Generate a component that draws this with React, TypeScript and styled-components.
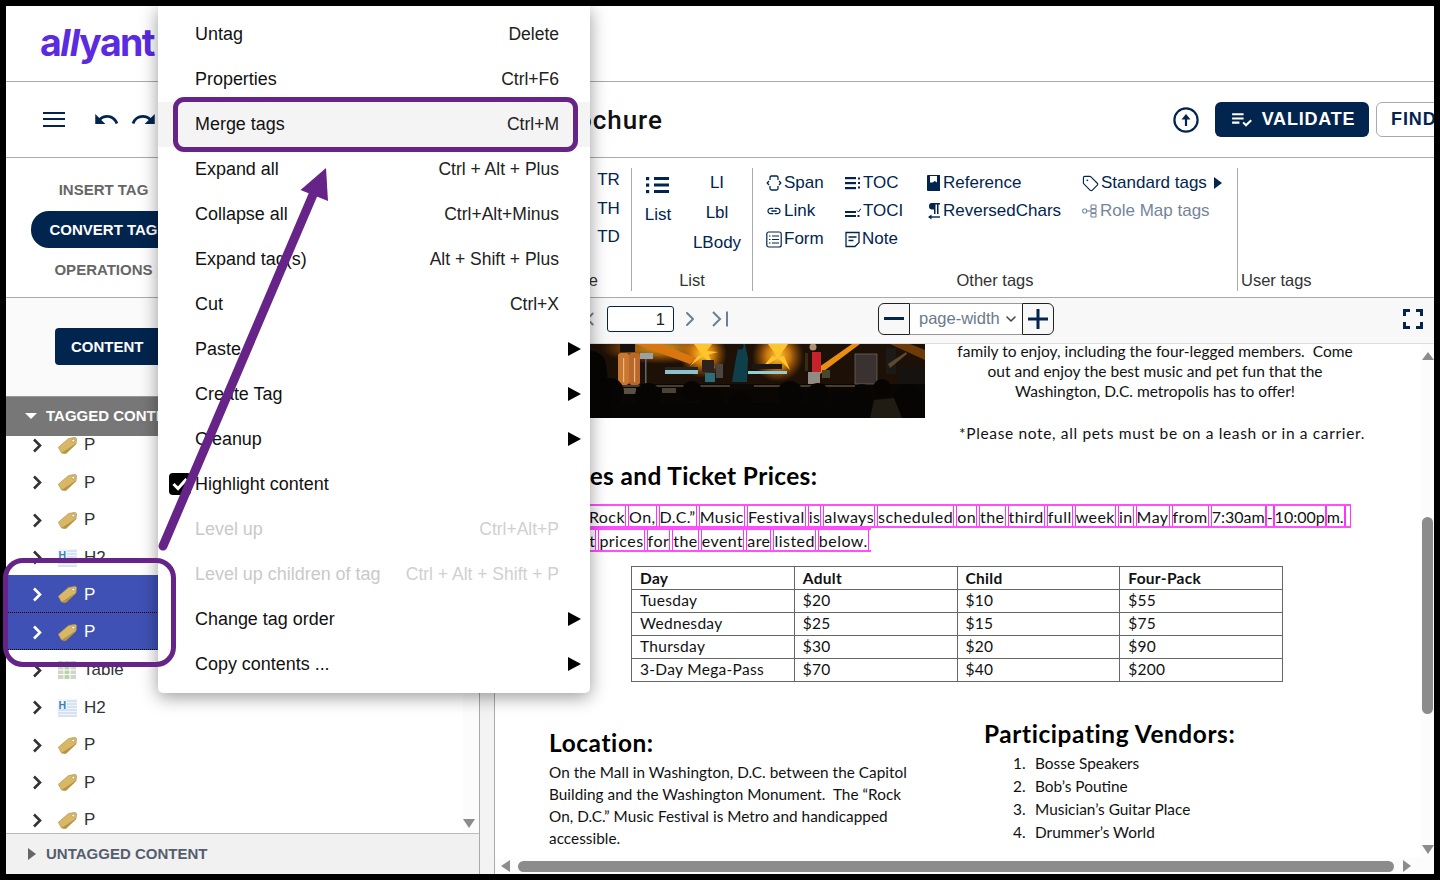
import React from 'react'
import styled, { createGlobalStyle } from 'styled-components'
import { ChevronDown, ChevronLeft, ChevronRight, Tag } from 'lucide-react'
import { MdUndo, MdRedo, MdPlaylistAddCheck, MdLink } from 'react-icons/md'

const NAVY = '#02254f'
const PURPLE = '#662489'
const UI_FONT = `"Liberation Sans", Arial, sans-serif`
const DOC_FONT = `Lato, "Open Sans", sans-serif`

const GlobalStyle = createGlobalStyle`
  html, body {
    margin: 0;
    background: #000;
    font-family: ${UI_FONT};
  }
  * { box-sizing: border-box; }
`

const Root = styled.div`
  position: relative;
  width: 1440px;
  height: 880px;
  padding: 6px;
  overflow: hidden;
`
const Frame = styled.div`
  position: relative;
  width: 1428px;
  height: 868px;
  background: #fff;
  overflow: hidden;
  display: flex;
  flex-direction: column;
`

/* top bars */
const LogoBar = styled.div`
  flex: 0 0 76px;
  border-bottom: 1px solid #aaa;
  padding-left: 34px;
  display: flex;
  align-items: center;
`
const Logo = styled.div`
  font-family: Inter, sans-serif;
  font-weight: 700;
  font-size: 37.5px;
  letter-spacing: -1.6px;
  color: #5a2be0;
  line-height: 1;
  white-space: nowrap;
  margin-top: -1px;
  i {
    font-style: italic;
    letter-spacing: -0.6px;
  }
`
const TitleBar = styled.div`
  flex: 0 0 76px;
  border-bottom: 1px solid #aaa;
  display: flex;
  align-items: center;
`
const TitleTools = styled.div`
  flex: 0 0 200px;
  padding-left: 37px;
  display: flex;
  align-items: center;
  gap: 10px;
  color: ${NAVY};
`
const Burger = styled.div`
  width: 22px;
  height: 15px;
  margin-right: 18px;
  border-top: 2.5px solid ${NAVY};
  border-bottom: 2.5px solid ${NAVY};
  position: relative;
  &::after {
    content: '';
    display: block;
    margin-top: 3.5px;
    height: 2.5px;
    background: ${NAVY};
  }
`
const Title = styled.h1`
  flex: 0 0 457px;
  margin: 0;
  text-align: right;
  font-family: Roboto, sans-serif;
  font-weight: 500;
  font-size: 26px;
  letter-spacing: 1px;
  color: #111;
  white-space: nowrap;
`
const Actions = styled.div`
  margin-left: auto;
  margin-right: -42px;
  display: flex;
  align-items: center;
`
const UploadIcon = styled.svg`
  width: 26px;
  height: 26px;
  margin-right: 16px;
`
const ValidateButton = styled.button`
  width: 154px;
  height: 35px;
  border: 0;
  border-radius: 6px;
  background: ${NAVY};
  color: #fff;
  font: bold 18px ${UI_FONT};
  letter-spacing: 0.8px;
  display: flex;
  align-items: center;
  justify-content: center;
  gap: 8px;
  margin-right: 7px;
`
const FindButton = styled.button`
  width: 100px;
  height: 35px;
  border: 1px solid #aaa;
  border-radius: 6px;
  background: #fff;
  color: ${NAVY};
  font: bold 18px ${UI_FONT};
  letter-spacing: 0.9px;
  text-align: left;
  padding-left: 14px;
`

/* ribbon */
const Ribbon = styled.div`
  flex: 0 0 140px;
  border-bottom: 1px solid #aaa;
  display: flex;
`
const Nav = styled.nav`
  flex: 0 0 190px;
  padding: 13px 0 0 25px;
  display: flex;
  flex-direction: column;
`
const NavItem = styled.div<{ $active?: boolean }>`
  width: 145px;
  height: 37px;
  margin-bottom: 3px;
  border-radius: 18px 0 0 18px;
  background: ${(p) => (p.$active ? NAVY : 'transparent')};
  color: ${(p) => (p.$active ? '#fff' : '#666')};
  font-weight: bold;
  font-size: 15px;
  white-space: nowrap;
  display: flex;
  align-items: center;
  justify-content: center;
`
const Group = styled.section<{ $width: number; $last?: boolean }>`
  flex: 0 0 ${(p) => p.$width}px;
  margin: 10px 0 6px;
  border-right: ${(p) => (p.$last ? '0' : '1px solid #aaa')};
  display: flex;
  flex-direction: column;
  color: ${NAVY};
  font-size: 17px;
`
const GroupBody = styled.div`
  flex: 1;
  min-height: 0;
`
const GroupLabel = styled.div<{ $align?: string; $pad?: number }>`
  height: 20px;
  line-height: 19px;
  font-size: 16.5px;
  color: #333;
  text-align: ${(p) => p.$align || 'center'};
  padding: 0 ${(p) => p.$pad || 0}px 0 ${(p) => (p.$align === 'left' ? 3 : 0)}px;
`
const TableCells = styled.div`
  margin-left: auto;
  width: 40px;
  padding-right: 5px;
  text-align: center;
  line-height: 28.5px;
  margin-top: -2px;
`
const TableGroupBody = styled(GroupBody)`
  display: flex;
`
const ListBody = styled(GroupBody)`
  display: grid;
  grid-template-columns: 52px 66px;
  text-align: center;
`
const ListLeft = styled.div`
  padding-top: 7px;
  display: flex;
  flex-direction: column;
  align-items: center;
  gap: 10px;
`
const ListRight = styled.div`
  line-height: 30px;
`
const OtherGrid = styled(GroupBody)`
  display: grid;
  grid-template-columns: 79px 81px 156px 1fr;
  grid-auto-rows: 28px;
  padding: 1px 0 0 13px;
`
const RibbonItem = styled.div<{ $disabled?: boolean }>`
  display: flex;
  align-items: center;
  gap: 2px;
  white-space: nowrap;
  color: ${(p) => (p.$disabled ? '#74859a' : NAVY)};
  svg {
    flex: 0 0 auto;
  }
`
const CaretRight = styled.span<{ $color?: string; $size?: number }>`
  display: inline-block;
  width: 0;
  height: 0;
  border-style: solid;
  border-width: ${(p) => p.$size || 6}px 0 ${(p) => p.$size || 6}px ${(p) => (p.$size || 6) + 2}px;
  border-color: transparent transparent transparent ${(p) => p.$color || NAVY};
`

/* lower part */
const Body = styled.div`
  flex: 1;
  min-height: 0;
  display: flex;
`
const LeftPane = styled.div`
  flex: 0 0 473px;
  display: flex;
  flex-direction: column;
`
const TabArea = styled.div`
  flex: 0 0 98px;
  background: #fafafa;
  padding: 30px 0 0 49px;
`
const ContentTab = styled.div`
  width: 160px;
  height: 37px;
  background: ${NAVY};
  color: #fff;
  font-weight: bold;
  font-size: 15px;
  border-radius: 4px 0 0 4px;
  display: flex;
  align-items: center;
  padding-left: 16px;
`
const PaneHeader = styled.div`
  flex: 0 0 40px;
  background: #777;
  border-top: 1px solid #999;
  display: flex;
  align-items: center;
  gap: 9px;
  padding: 0 0 2px 19px;
  color: #fff;
  font-weight: bold;
  font-size: 15px;
`
const CaretDown = styled.span`
  width: 0;
  height: 0;
  border-style: solid;
  border-width: 6px 6px 0 6px;
  border-color: #fff transparent transparent transparent;
`
const TreeArea = styled.div`
  flex: 1;
  min-height: 0;
  display: flex;
  overflow: hidden;
`
const TreeList = styled.div`
  flex: 1;
  margin-top: -11px;
`
const TreeRow = styled.div<{ $selected?: boolean }>`
  height: 37.5px;
  display: flex;
  align-items: center;
  padding: 3px 0 0 26px;
  background: ${(p) => (p.$selected ? '#3f51b5' : 'transparent')};
  border-bottom: ${(p) => (p.$selected ? '1px dotted #000' : '0')};
  color: ${(p) => (p.$selected ? '#fff' : '#333')};
  font-size: 17px;
  svg.tree-chevron {
    margin-right: 15px;
  }
  svg.tree-icon {
    margin-right: 7px;
  }
`
const TreeScroll = styled.div`
  flex: 0 0 16px;
  background: #fcfcfc;
  display: flex;
  flex-direction: column;
  justify-content: flex-end;
  align-items: center;
  padding: 0 4px 5px 0;
`
const GrayDown = styled.span`
  width: 0;
  height: 0;
  border-style: solid;
  border-width: 9px 6px 0 6px;
  border-color: #8c8c8c transparent transparent transparent;
`
const GrayUp = styled.span`
  width: 0;
  height: 0;
  border-style: solid;
  border-width: 0 6px 8px 6px;
  border-color: transparent transparent #8c8c8c transparent;
`
const Untagged = styled.div`
  flex: 0 0 41px;
  background: #f1f1f1;
  border-top: 1px solid #bbb;
  display: flex;
  align-items: center;
  gap: 10px;
  padding: 0 0 1px 22px;
  color: #555e6e;
  font-weight: bold;
  font-size: 15px;
`
const Splitter = styled.div`
  flex: 0 0 16px;
  background: #f3f3f3;
  border-left: 1px solid #aaa;
  border-right: 1px solid #aaa;
`
const DocArea = styled.div`
  flex: 1;
  min-width: 0;
  display: flex;
  flex-direction: column;
`
const Toolbar = styled.div`
  flex: 0 0 46px;
  background: #f8f8f8;
  border-bottom: 1px solid #ddd;
  display: flex;
  align-items: center;
  padding: 0 11px 4px 84px;
  color: #6c7f93;
`
const PageInput = styled.div`
  width: 67px;
  height: 26px;
  margin: 0 4px 0 6px;
  background: #fff;
  border: 1px solid ${NAVY};
  border-radius: 3px;
  color: #222;
  font-size: 16.5px;
  line-height: 24px;
  text-align: right;
  padding-right: 8px;
`
const LastPage = styled.svg`
  margin-left: 9px;
`
const ZoomCluster = styled.div`
  margin-left: 147px;
  display: flex;
  align-items: center;
`
const ZoomButton = styled.div<{ $side: 'left' | 'right' }>`
  width: 32px;
  height: 32px;
  background: #f8f8f8;
  border: 1.5px solid #222;
  border-radius: ${(p) => (p.$side === 'left' ? '6px 0 0 6px' : '0 6px 6px 0')};
  color: ${NAVY};
  display: flex;
  align-items: center;
  justify-content: center;
`
const ZoomSelect = styled.div`
  width: 112px;
  height: 32px;
  background: #fff;
  border-top: 1px solid #999;
  border-bottom: 1px solid #999;
  color: #6a7a8c;
  font-size: 16.5px;
  display: flex;
  align-items: center;
  justify-content: space-between;
  padding: 0 3px 0 9px;
  svg {
    color: #445;
  }
`
const Fullscreen = styled.svg`
  margin-left: auto;
  width: 20px;
  height: 20px;
`
const DocMain = styled.div`
  flex: 1;
  min-height: 0;
  display: flex;
  overflow: hidden;
`
const Page = styled.div`
  flex: 1;
  min-width: 0;
  padding-left: 54px;
  font-family: ${DOC_FONT};
  font-size: 15.5px;
  color: #111;
  overflow: hidden;
`
const PageTop = styled.div`
  display: flex;
  margin-top: -3px;
`
const Photo = styled.svg`
  flex: 0 0 376px;
  height: 74px;
  margin-top: 3px;
`
const Intro = styled.div`
  flex: 0 0 430px;
  margin-left: 15px;
  line-height: 20px;
  text-align: center;
  white-space: pre-wrap;
`
const Note = styled.div`
  margin: 22px 0 0 19px;
  text-align: left;
  white-space: nowrap;
  letter-spacing: 0.65px;
`
const Heading = styled.h2`
  margin: 18px 0 13px;
  font-size: 24.4px;
  line-height: 30px;
  font-weight: 700;
  letter-spacing: 0.4px;
  color: #000;
  white-space: nowrap;
`
const TagLines = styled.div`
  display: flex;
  flex-direction: column;
  align-items: flex-start;
  font-size: 16px;
  letter-spacing: 0.45px;
`
const TagLine = styled.div`
  display: flex;
  height: 24px;
  border-top: 2px solid #ff4dff;
  border-bottom: 2px solid #ff4dff;
  line-height: 19px;
  white-space: nowrap;
`
const Word = styled.span<{ $tight?: boolean }>`
  padding-top: 1px;
  border-left: 1.5px solid #ff33ff;
  border-right: 1.5px solid #ff33ff;
  margin-right: ${(p) => (p.$tight ? 0 : 2)}px;
  letter-spacing: ${(p) => (p.$tight ? '0' : 'inherit')};
`
const EndWord = styled(Word)`
  width: 6px;
  margin-right: 0;
`
const PriceTable = styled.table`
  margin: 14px 0 0 82px;
  width: 652px;
  border-collapse: collapse;
  table-layout: fixed;
  line-height: 21px;
  letter-spacing: 0.3px;
  th, td {
    height: 23px;
    border: 1px solid #666;
    padding: 0 0 1px 8px;
    text-align: left;
  }
  th {
    padding-bottom: 0;
  }
`
const PageBottom = styled.div`
  margin-top: 37px;
  display: grid;
  grid-template-columns: 435px 1fr;
`
const LocationCol = styled.div`
  padding-top: 9px;
  line-height: 22px;
  font-size: 15.3px;
  letter-spacing: 0.04px;
`
const BlockHeading = styled.h3`
  margin: 0 0 3px;
  font-size: 24.4px;
  line-height: 30px;
  font-weight: 700;
  letter-spacing: 0.6px;
  color: #000;
  white-space: nowrap;
`
const VendorCol = styled.div`
  font-size: 15.4px;
`
const VendorRow = styled.div`
  display: flex;
  padding-left: 29px;
  line-height: 23px;
`
const VendorNum = styled.span`
  flex: 0 0 22px;
`
const VScroll = styled.div`
  flex: 0 0 13px;
  background: #fcfcfc;
  display: flex;
  flex-direction: column;
  align-items: center;
  padding-top: 8px;
`
const VThumb = styled.div`
  width: 11px;
  height: 197px;
  margin: 157px 0 131px;
  border-radius: 6px;
  background: #8c8c8c;
`
const HScroll = styled.div`
  flex: 0 0 16px;
  background: #fcfcfc;
  display: flex;
  align-items: center;
  padding: 0 0 0 6px;
`
const HThumb = styled.div`
  width: 876px;
  height: 11px;
  margin: 0 9px 0 8px;
  border-radius: 6px;
  background: #8c8c8c;
`
const GrayLeft = styled.span`
  width: 0;
  height: 0;
  border-style: solid;
  border-width: 6px 9px 6px 0;
  border-color: transparent #8c8c8c transparent transparent;
`

/* context menu and annotations */
const Menu = styled.div`
  position: absolute;
  left: 152px;
  top: 0;
  width: 432px;
  height: 687px;
  padding: 5.5px 0;
  background: #fff;
  border-radius: 0 0 5px 5px;
  box-shadow: 0 4px 18px rgba(0, 0, 0, 0.4);
  font-size: 17.95px;
`
const MenuItem = styled.div<{ $hover?: boolean; $disabled?: boolean }>`
  position: relative;
  height: 45px;
  padding: 0 31px 0 37px;
  display: flex;
  align-items: center;
  justify-content: space-between;
  white-space: nowrap;
  background: ${(p) => (p.$hover ? '#f4f4f4' : 'transparent')};
  color: ${(p) => (p.$disabled ? '#c9c9c9' : '#111')};
`
const Shortcut = styled.span<{ $disabled?: boolean }>`
  font-size: 17.5px;
  color: ${(p) => (p.$disabled ? '#d0d0d0' : '#222')};
`
const SubCaret = styled.span`
  width: 0;
  height: 0;
  margin-right: -22px;
  border-style: solid;
  border-width: 7px 0 7px 13px;
  border-color: transparent transparent transparent #000;
`
const CheckBox = styled.span`
  position: absolute;
  left: 11px;
  top: 11px;
  width: 22px;
  height: 22px;
  border-radius: 4px;
  background: #000;
  display: flex;
  align-items: center;
  justify-content: center;
`
const Callout = styled.div`
  position: absolute;
  border: 5px solid ${PURPLE};
  pointer-events: none;
`
const MergeCallout = styled(Callout)`
  left: 173px;
  top: 97px;
  width: 405px;
  height: 55px;
  border-radius: 11px;
`
const RowsCallout = styled(Callout)`
  left: 3px;
  top: 558px;
  width: 173px;
  height: 109px;
  border-radius: 20px;
`
const ArrowOverlay = styled.svg`
  position: absolute;
  left: 0;
  top: 0;
  pointer-events: none;
`

/* icons */
const TreeChevron = () => (
  <svg className="tree-chevron" width="11" height="15" viewBox="0 0 11 15" fill="none" stroke="currentColor" strokeWidth="2.6">
    <path d="M2 1.5l6 6-6 6" />
  </svg>
)
const TagIcon = () => (
  <svg className="tree-icon" width="19" height="17" viewBox="0 0 19 17">
    <path d="M0.3 10.3 L10.5 1.5 L17 0.3 L18.7 1.5 L18 7 L7.8 16.6 L3.5 16 Z" fill="#d8b866" stroke="#ac9044" strokeWidth="0.6" />
    <path d="M3.5 16 L18 6.5 L18 7 L7.8 16.6 Z" fill="#b39443" />
    <circle cx="15.3" cy="3.6" r="1.4" fill="#fff" stroke="#8a7a45" strokeWidth="0.5" />
  </svg>
)
const H2Icon = () => (
  <svg className="tree-icon" width="19" height="18" viewBox="0 0 19 18">
    <rect x="0" y="0" width="19" height="18" fill="#f1f5fb" />
    <text x="0.5" y="9.5" fontSize="10.5" fontWeight="bold" fontFamily="Liberation Sans" fill="#3b7fb8">H</text>
    <path d="M9 2h10M9 5h10M9 8h10M0 11h19M0 14h19M0 17h19" stroke="#bcd0e8" strokeWidth="1" />
  </svg>
)
const TableIcon = () => (
  <svg className="tree-icon" width="18" height="18" viewBox="0 0 18 18">
    <rect width="18" height="18" fill="#cdd8c4" />
    <rect y="0" width="18" height="4" fill="#c9c9c9" />
    <rect x="6" y="5" width="5" height="13" fill="#b7d3a8" />
    <path d="M0 4.5h18M0 9h18M0 13.5h18M6 0v18M12 0v18" stroke="#fff" strokeWidth="1" />
  </svg>
)
const SpanIcon = () => (
  <svg width="16" height="20" viewBox="0 0 16 20" fill="none" stroke={NAVY} strokeWidth="1.3">
    <path d="M4 7V4.5Q4 3 5.5 3h5Q12 3 12 4.5V7M4 13v2.5Q4 17 5.5 17h5q1.5 0 1.5-1.5V13" />
    <path d="M3 8L1.2 10 3 12M13 8l1.8 2L13 12" />
  </svg>
)
const FormIcon = () => (
  <svg width="16" height="17" viewBox="0 0 16 17" fill="none" stroke={NAVY} strokeWidth="1.2">
    <rect x="0.8" y="1" width="14.4" height="15" rx="2" />
    <path d="M3 5h1.5M6 5h7M3 8.5h1.5M6 8.5h7M3 12h1.5M6 12h7" />
  </svg>
)
const TocIcon = () => (
  <svg width="16" height="16" viewBox="0 0 16 16" fill={NAVY}>
    <rect x="0" y="2" width="11" height="2.2" />
    <rect x="0" y="7" width="11" height="2.2" />
    <rect x="0" y="12" width="11" height="2.2" />
    <rect x="13" y="2.5" width="2" height="2" />
    <rect x="13" y="7" width="2" height="2" />
    <rect x="13" y="11.5" width="2" height="2" />
  </svg>
)
const TociIcon = () => (
  <svg width="16" height="16" viewBox="0 0 16 16" fill={NAVY}>
    <rect x="0" y="8" width="11" height="2" />
    <rect x="0" y="12" width="11" height="2" />
    <rect x="12.5" y="12" width="2" height="2" />
    <path d="M12 7.5l1.5 1.5L16 5.5" fill="none" stroke={NAVY} strokeWidth="1" />
  </svg>
)
const NoteIcon = () => (
  <svg width="15" height="17" viewBox="0 0 15 17" fill="none" stroke={NAVY} strokeWidth="1.3">
    <path d="M1 1.5h13v10l-4 4H1zM3.5 6h8M3.5 9.5h5" />
  </svg>
)
const ReferenceIcon = () => (
  <svg width="15" height="18" viewBox="0 0 15 18" fill={NAVY}>
    <path d="M1 2q0-1 1-1h12v16H2q-1 0-1-1z" />
    <path d="M4 1h7v6.5L8.8 6 6.5 7.5H4z" fill="#fff" transform="translate(0 1)" />
  </svg>
)
const ReversedIcon = () => (
  <svg width="15" height="18" viewBox="0 0 15 18" fill={NAVY}>
    <path d="M6 1h8v1.5h-1.5V12H11V2.5H9.5V12H8V7.5H6Q3 7.5 3 4.2T6 1z" />
    <path d="M14 15H4.5" stroke={NAVY} strokeWidth="1.4" />
    <path d="M5.5 12.5v5L2 15z" />
  </svg>
)
const RoleMapIcon = () => (
  <svg width="16" height="14" viewBox="0 0 16 14" fill="none" stroke="#74859a" strokeWidth="1.1">
    <rect x="0.7" y="5" width="4" height="4" rx="1.5" />
    <rect x="9" y="1" width="5" height="3.5" rx="0.6" />
    <rect x="9" y="5.2" width="5" height="3.5" rx="0.6" />
    <rect x="9" y="9.5" width="5" height="3.5" rx="0.6" />
    <path d="M4.7 7H9" />
  </svg>
)
const BigListIcon = () => (
  <svg width="24" height="20" viewBox="0 0 24 20" fill={NAVY}>
    <rect x="0" y="2" width="3.2" height="3.2" />
    <rect x="0" y="8.5" width="3.2" height="3.2" />
    <rect x="0" y="15" width="3.2" height="3.2" />
    <rect x="8" y="2" width="15" height="3" />
    <rect x="8" y="8.5" width="15" height="3" />
    <rect x="8" y="15" width="15" height="3" />
  </svg>
)
const LastPageIcon = () => (
  <LastPage width="20" height="20" viewBox="0 0 20 20" fill="none" stroke="#6c7f93" strokeWidth="2">
    <path d="M2 3l7 7-7 7M16 2.5v15" />
  </LastPage>
)

const menuItems: {
  label: string
  keys?: string
  sub?: boolean
  hover?: boolean
  disabled?: boolean
  checked?: boolean
}[] = [
  { label: 'Untag', keys: 'Delete' },
  { label: 'Properties', keys: 'Ctrl+F6' },
  { label: 'Merge tags', keys: 'Ctrl+M', hover: true },
  { label: 'Expand all', keys: 'Ctrl + Alt + Plus' },
  { label: 'Collapse all', keys: 'Ctrl+Alt+Minus' },
  { label: 'Expand tag(s)', keys: 'Alt + Shift + Plus' },
  { label: 'Cut', keys: 'Ctrl+X' },
  { label: 'Paste', sub: true },
  { label: 'Create Tag', sub: true },
  { label: 'Cleanup', sub: true },
  { label: 'Highlight content', checked: true },
  { label: 'Level up', keys: 'Ctrl+Alt+P', disabled: true },
  { label: 'Level up children of tag', keys: 'Ctrl + Alt + Shift + P', disabled: true },
  { label: 'Change tag order', sub: true },
  { label: 'Copy contents ...', sub: true },
]

const treeRows: { label: string; icon: 'tag' | 'h2' | 'table'; selected?: boolean }[] = [
  { label: 'P', icon: 'tag' },
  { label: 'P', icon: 'tag' },
  { label: 'P', icon: 'tag' },
  { label: 'H2', icon: 'h2' },
  { label: 'P', icon: 'tag', selected: true },
  { label: 'P', icon: 'tag', selected: true },
  { label: 'Table', icon: 'table' },
  { label: 'H2', icon: 'h2' },
  { label: 'P', icon: 'tag' },
  { label: 'P', icon: 'tag' },
  { label: 'P', icon: 'tag' },
]

const lineOne = [
  'The “Rock', 'On,', 'D.C.”', 'Music', 'Festival', 'is', 'always', 'scheduled', 'on', 'the', 'third',
  'full', 'week', 'in', 'May', 'from',
]
const lineOneTail = ['7:30am', '-', '10:00p', 'm.']
const lineTwo = ['Ticket', 'prices', 'for', 'the', 'event', 'are', 'listed', 'below.']

const prices = [
  ['Tuesday', '$20', '$10', '$55'],
  ['Wednesday', '$25', '$15', '$75'],
  ['Thursday', '$30', '$20', '$90'],
  ['3-Day Mega-Pass', '$70', '$40', '$200'],
]

const vendors = ['Bosse Speakers', 'Bob’s Poutine', 'Musician’s Guitar Place', 'Drummer’s World']

const treeIcons = { tag: <TagIcon />, h2: <H2Icon />, table: <TableIcon /> }

const crowd = [
  [58, 52, 13], [20, 48, 14], [102, 47, 10], [122, 56, 12], [150, 60, 12], [200, 50, 13],
  [228, 50, 11], [252, 58, 12], [272, 50, 10], [292, 44, 9], [318, 54, 14],
]

const StagePhoto = () => (
  <Photo viewBox="-41 0 376 74" preserveAspectRatio="none">
    <defs>
      <radialGradient id="glow">
        <stop offset="0" stopColor="#ffcf3a" />
        <stop offset="0.45" stopColor="#e8890f" stopOpacity="0.85" />
        <stop offset="1" stopColor="#b85f08" stopOpacity="0" />
      </radialGradient>
    </defs>
    <rect x="-41" width="376" height="74" fill="#0a0604" />
    <rect x="-41" width="376" height="40" fill="#1d1007" />
    <ellipse cx="70" cy="4" rx="60" ry="16" fill="url(#glow)" opacity="0.75" />
    <ellipse cx="113" cy="10" rx="24" ry="24" fill="url(#glow)" />
    <ellipse cx="188" cy="12" rx="26" ry="26" fill="url(#glow)" />
    <path d="M113 12 L104 0 L122 0 Z M113 12 L100 22 L108 12 Z M113 12 L125 24 L118 10 Z M113 12 L128 8 L117 7 Z" fill="#ffc52e" />
    <path d="M188 14 L178 0 L198 0 Z M188 14 L172 24 L182 12 Z M188 14 L200 26 L194 12 Z" fill="#ffc52e" />
    <path d="M222 28 L262 0 L270 0 L230 30 Z" fill="#ea8d12" />
    <path d="M45 0 L100 20 L106 14 L72 0 Z" fill="#d9760f" />
    <path d="M300 0 L335 16 L335 6 L320 0 Z" fill="#6e3b08" />
    <rect x="28" y="9" width="11" height="32" rx="3" fill="#c9772f" />
    <rect x="39" y="9" width="11" height="32" rx="3" fill="#b8682a" />
    <rect x="33" y="14" width="1.2" height="24" fill="#e8b48a" />
    <rect x="44" y="14" width="1.2" height="24" fill="#e8b48a" />
    <rect x="30" y="0" width="15" height="8" fill="#15110e" />
    <rect x="50" y="9" width="13" height="6" fill="#9aa0a4" />
    <rect x="55" y="15" width="1.5" height="26" fill="#666" />
    <rect x="75" y="23" width="33" height="3" fill="#252220" />
    <rect x="75" y="26" width="33" height="4" fill="#8fc0c9" />
    <rect x="112" y="16" width="12" height="12" fill="#2a2320" />
    <rect x="115" y="29" width="10" height="9" fill="#2b6d78" />
    <rect x="126" y="20" width="7" height="14" fill="#4d4640" />
    <path d="M142 38 L146 14 L149 0 L155 0 L158 14 L157 38 Z" fill="#0e3f4b" />
    <circle cx="150" cy="2" r="3.5" fill="#161311" />
    <rect x="158" y="27" width="39" height="3" fill="#93cdd4" />
    <rect x="162" y="20" width="30" height="5" fill="#1a1816" />
    <rect x="215" y="9" width="3" height="18" fill="#3a2a12" />
    <rect x="222" y="8" width="9" height="20" fill="#c5222a" />
    <circle cx="223" cy="3" r="3.5" fill="#b58f72" />
    <rect x="218" y="28" width="12" height="12" fill="#8f8a82" />
    <rect x="232" y="26" width="8" height="8" fill="#4a4636" />
    <rect x="265" y="10" width="22" height="30" fill="#3a3230" stroke="#7a6c5c" strokeWidth="0.7" />
    <rect x="296" y="4" width="10" height="26" fill="#1c1a16" />
    <path d="M298 20 L316 8 L317 10 L300 24 Z" fill="#5a4a30" />
    <rect x="308" y="22" width="27" height="18" fill="#15120f" />
    <rect x="0" y="41" width="265" height="2" fill="#4a3d2c" />
    <rect x="30" y="44" width="16" height="6" fill="#5a5044" />
    <rect x="72" y="44" width="14" height="5" fill="#4a4238" />
    <rect x="140" y="40" width="24" height="5" fill="#0c0a08" />
    <path d="M-41 18 L-10 6 Q14 5 16 20 L22 74 L-41 74 Z" fill="#070504" />
    {crowd.map(([cx, cy, r]) => (
      <circle key={cx} cx={cx} cy={cy} r={r} fill="#070504" />
    ))}
    <path d="M10 74 L16 60 L335 58 L335 74 Z" fill="#070504" />
    <path d="M280 74 L284 56 L304 54 L312 74 Z" fill="#201b13" />
  </Photo>
)

const App = () => {
  return (
    <Root>
      <GlobalStyle />
      <Frame>
        <LogoBar>
          <Logo>
            a<i>ll</i>yant
          </Logo>
        </LogoBar>

        <TitleBar>
          <TitleTools>
            <Burger />
            <MdUndo size={27} />
            <MdRedo size={27} />
          </TitleTools>
          <Title>Festival Brochure</Title>
          <Actions>
            <UploadIcon viewBox="0 0 26 26" fill="none">
              <circle cx="13" cy="13" r="11.6" stroke={NAVY} strokeWidth="2.2" />
              <path d="M13 19v-8" stroke={NAVY} strokeWidth="2.2" />
              <path d="M8.5 12.5L13 7l4.5 5.5z" fill={NAVY} />
            </UploadIcon>
            <ValidateButton>
              <MdPlaylistAddCheck size={25} />
              VALIDATE
            </ValidateButton>
            <FindButton>FIND</FindButton>
          </Actions>
        </TitleBar>

        <Ribbon>
          <Nav>
            <NavItem>INSERT TAG</NavItem>
            <NavItem $active>CONVERT TAG</NavItem>
            <NavItem>OPERATIONS</NavItem>
          </Nav>
          <Group $width={436}>
            <TableGroupBody>
              <TableCells>
                TR
                <br />
                TH
                <br />
                TD
              </TableCells>
            </TableGroupBody>
            <GroupLabel $align="right" $pad={33}>
              Table
            </GroupLabel>
          </Group>
          <Group $width={121}>
            <ListBody>
              <ListLeft>
                <BigListIcon />
                <span>List</span>
              </ListLeft>
              <ListRight>
                LI
                <br />
                Lbl
                <br />
                LBody
              </ListRight>
            </ListBody>
            <GroupLabel>List</GroupLabel>
          </Group>
          <Group $width={485}>
            <OtherGrid>
              <RibbonItem>
                <SpanIcon />
                Span
              </RibbonItem>
              <RibbonItem>
                <TocIcon />
                TOC
              </RibbonItem>
              <RibbonItem>
                <ReferenceIcon />
                Reference
              </RibbonItem>
              <RibbonItem>
                <Tag size={17} strokeWidth={1.6} />
                Standard tags&nbsp;
                <CaretRight $size={6} />
              </RibbonItem>
              <RibbonItem>
                <MdLink size={16} />
                Link
              </RibbonItem>
              <RibbonItem>
                <TociIcon />
                TOCI
              </RibbonItem>
              <RibbonItem>
                <ReversedIcon />
                ReversedChars
              </RibbonItem>
              <RibbonItem $disabled>
                <RoleMapIcon />
                Role Map tags
              </RibbonItem>
              <RibbonItem>
                <FormIcon />
                Form
              </RibbonItem>
              <RibbonItem>
                <NoteIcon />
                Note
              </RibbonItem>
            </OtherGrid>
            <GroupLabel>Other tags</GroupLabel>
          </Group>
          <Group $width={196} $last>
            <GroupBody />
            <GroupLabel $align="left">User tags</GroupLabel>
          </Group>
        </Ribbon>

        <Body>
          <LeftPane>
            <TabArea>
              <ContentTab>CONTENT</ContentTab>
            </TabArea>
            <PaneHeader>
              <CaretDown />
              TAGGED CONTENT
            </PaneHeader>
            <TreeArea>
              <TreeList>
                {treeRows.map((row, i) => (
                  <TreeRow key={i} $selected={row.selected}>
                    <TreeChevron />
                    {treeIcons[row.icon]}
                    {row.label}
                  </TreeRow>
                ))}
              </TreeList>
              <TreeScroll>
                <GrayDown />
              </TreeScroll>
            </TreeArea>
            <Untagged>
              <CaretRight $color="#666" $size={6} />
              UNTAGGED CONTENT
            </Untagged>
          </LeftPane>

          <Splitter />

          <DocArea>
            <Toolbar>
              <ChevronLeft size={22} />
              <PageInput>1</PageInput>
              <ChevronRight size={24} />
              <LastPageIcon />
              <ZoomCluster>
                <ZoomButton $side="left">
                  <svg width="20" height="4" viewBox="0 0 20 4">
                    <rect width="20" height="3" fill={NAVY} />
                  </svg>
                </ZoomButton>
                <ZoomSelect>
                  page-width
                  <ChevronDown size={16} strokeWidth={2.4} />
                </ZoomSelect>
                <ZoomButton $side="right">
                  <svg width="20" height="20" viewBox="0 0 20 20" fill={NAVY}>
                    <rect y="8.5" width="20" height="3" />
                    <rect x="8.5" width="3" height="20" />
                  </svg>
                </ZoomButton>
              </ZoomCluster>
              <Fullscreen viewBox="0 0 20 20" fill="none" stroke={NAVY} strokeWidth="3">
                <path d="M1.5 7V1.5H7M13 1.5h5.5V7M18.5 13v5.5H13M7 18.5H1.5V13" />
              </Fullscreen>
            </Toolbar>

            <DocMain>
              <Page>
                <PageTop>
                  <StagePhoto />
                  <Intro>
                    {'family to enjoy, including the four-legged members.  Come\nout and enjoy the best music and pet fun that the\nWashington, D.C. metropolis has to offer!'}
                    <Note>*Please note, all pets must be on a leash or in a carrier.</Note>
                  </Intro>
                </PageTop>
                <Heading>Dates and Ticket Prices:</Heading>
                <TagLines>
                  <TagLine>
                    {lineOne.map((w, i) => (
                      <Word key={i}>{w}</Word>
                    ))}
                    {lineOneTail.map((w) => (
                      <Word key={w} $tight>
                        {w}
                      </Word>
                    ))}
                    <EndWord />
                  </TagLine>
                  <TagLine>
                    {lineTwo.map((w, i) => (
                      <Word key={i}>{w}</Word>
                    ))}
                  </TagLine>
                </TagLines>
                <PriceTable>
                  <thead>
                    <tr>
                      <th>Day</th>
                      <th>Adult</th>
                      <th>Child</th>
                      <th>Four-Pack</th>
                    </tr>
                  </thead>
                  <tbody>
                    {prices.map((row) => (
                      <tr key={row[0]}>
                        {row.map((cell) => (
                          <td key={cell}>{cell}</td>
                        ))}
                      </tr>
                    ))}
                  </tbody>
                </PriceTable>
                <PageBottom>
                  <LocationCol>
                    <BlockHeading>Location:</BlockHeading>
                    On the Mall in Washington, D.C. between the Capitol
                    <br />
                    Building and the Washington Monument.&nbsp; The “Rock
                    <br />
                    On, D.C.” Music Festival is Metro and handicapped
                    <br />
                    accessible.
                  </LocationCol>
                  <VendorCol>
                    <BlockHeading>Participating Vendors:</BlockHeading>
                    {vendors.map((v, i) => (
                      <VendorRow key={v}>
                        <VendorNum>{i + 1}.</VendorNum>
                        {v}
                      </VendorRow>
                    ))}
                  </VendorCol>
                </PageBottom>
              </Page>
              <VScroll>
                <GrayUp />
                <VThumb />
                <GrayDown />
              </VScroll>
            </DocMain>
            <HScroll>
              <GrayLeft />
              <HThumb />
              <CaretRight $color="#8c8c8c" $size={6} />
            </HScroll>
          </DocArea>
        </Body>

        <Menu>
          {menuItems.map((item) => (
            <MenuItem key={item.label} $hover={item.hover} $disabled={item.disabled}>
              {item.checked && (
                <CheckBox>
                  <svg width="16" height="14" viewBox="0 0 16 14" fill="none" stroke="#fff" strokeWidth="3">
                    <path d="M1.5 7l4.5 4.5L14.5 2" />
                  </svg>
                </CheckBox>
              )}
              <span>{item.label}</span>
              {item.keys && <Shortcut $disabled={item.disabled}>{item.keys}</Shortcut>}
              {item.sub && <SubCaret />}
            </MenuItem>
          ))}
        </Menu>
      </Frame>

      <MergeCallout />
      <RowsCallout />
      <ArrowOverlay width="1440" height="880" viewBox="0 0 1440 880">
        <path d="M163 546 L315 190" stroke={PURPLE} strokeWidth="9" strokeLinecap="round" fill="none" />
        <path d="M326 168 L300.5 190 L328 201 Z" fill={PURPLE} />
      </ArrowOverlay>
    </Root>
  )
}

export default App
